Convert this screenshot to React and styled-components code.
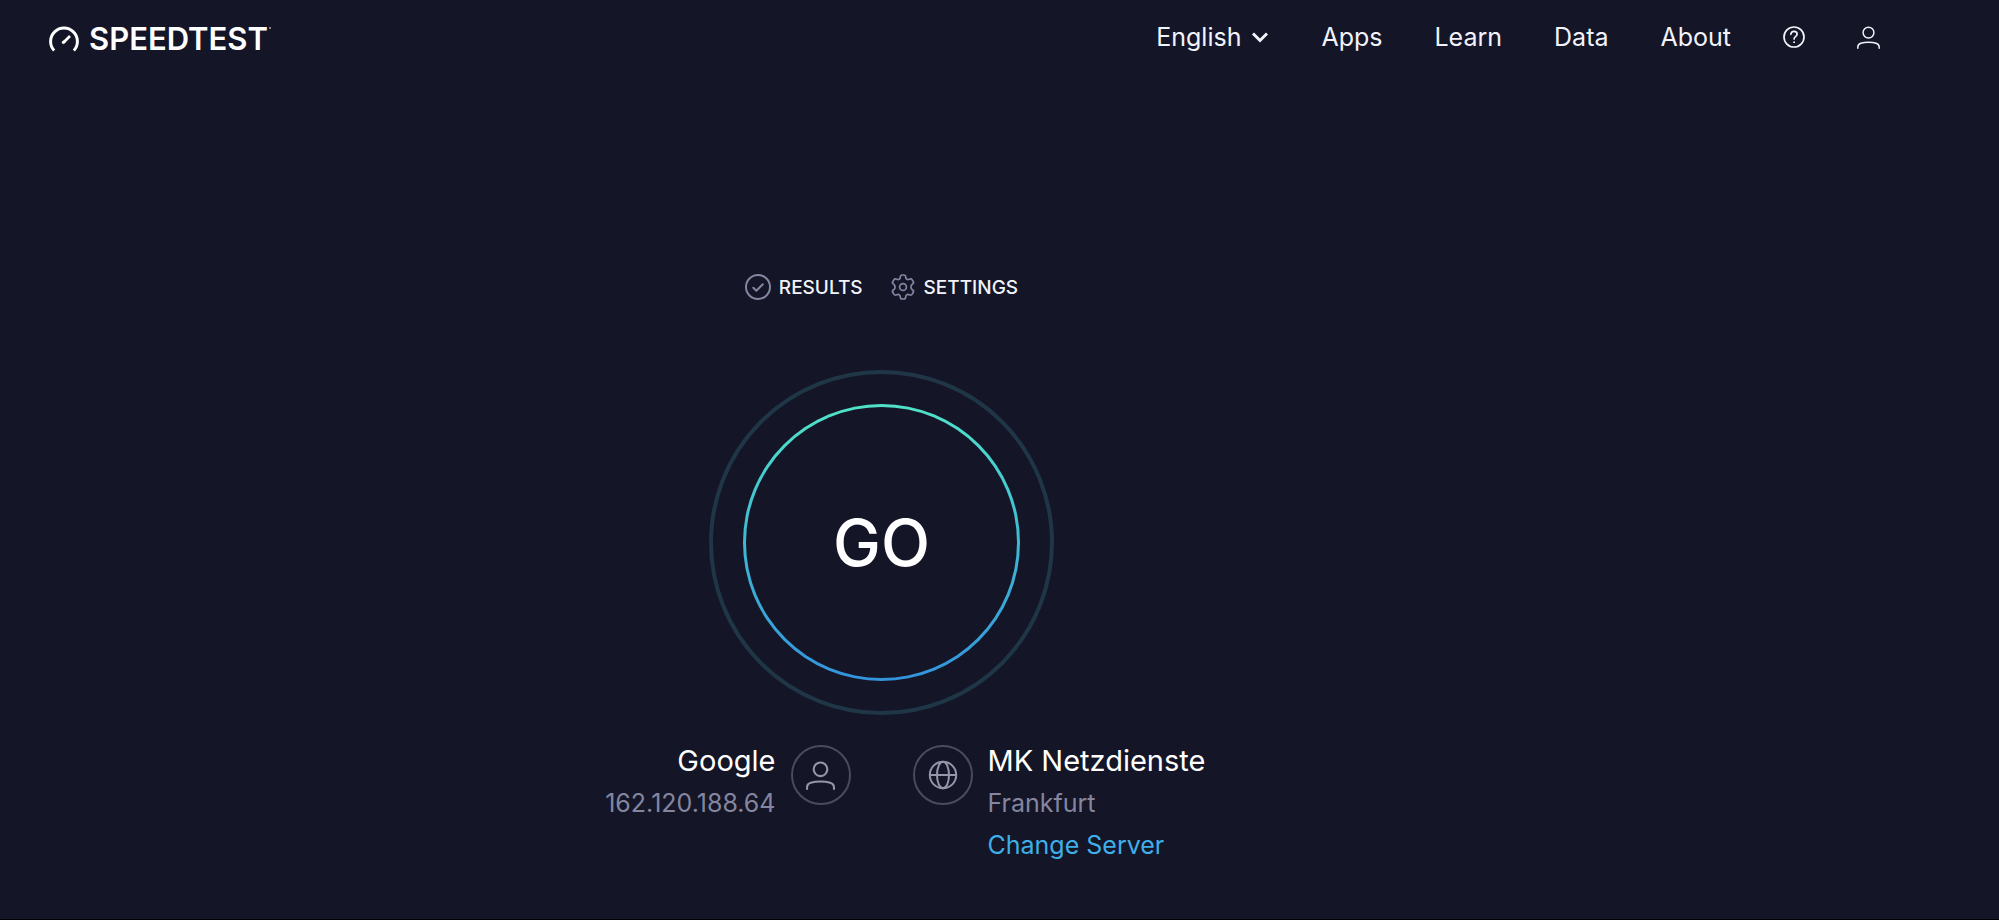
import React from 'react';
import styled, { createGlobalStyle } from 'styled-components';

const PersonIcon = ({ size, stroke }) => (
  <svg width={size} height={size} viewBox='0 0 28 28' fill='none' stroke='currentColor' strokeWidth={stroke} strokeLinecap='round' aria-hidden='true'>
    <circle cx='14' cy='8' r='6.6' />
    <path d='M1 27v-1.5c0-2.3 1.4-3.8 3.6-4.5 2.6-.8 5.8-1.2 9.4-1.2s6.8.4 9.4 1.2c2.2.7 3.6 2.2 3.6 4.5V27' />
  </svg>
);

const GaugeIcon = () => (
  <svg width='32' height='28' viewBox='0 0 32 28' fill='none' stroke='currentColor' strokeLinecap='round' aria-hidden='true'>
    <path d='M6.2 25.6A13.4 13.4 0 1 1 25.8 25.6' strokeWidth='3' strokeLinecap='butt' />
    <path d='M16 17L22 11' strokeWidth='2.6' strokeLinecap='butt' />
    <circle cx='15.5' cy='17.3' r='1.3' fill='currentColor' strokeWidth='1' />
  </svg>
);

const ChevronIcon = () => (
  <svg width='18' height='14' viewBox='0 0 18 14' fill='none' stroke='currentColor' strokeWidth='3' aria-hidden='true'>
    <path d='M2 3.5l7 7 7-7' />
  </svg>
);

const HelpIcon = () => (
  <svg width='22' height='22' viewBox='0 0 22 22' fill='none' stroke='currentColor' strokeWidth='1.7' strokeLinecap='round' aria-hidden='true'>
    <circle cx='11' cy='11' r='10' />
    <path d='M7.9 8.3c.1-1.9 1.3-3 3.1-3s3.1 1.100 3.100 2.700c0 1.300-.7 1.900-1.600 2.600s-1.400 1.200-1.400 2.400' />
    <circle cx='11' cy='16.2' r='.5' fill='currentColor' strokeWidth='1' />
  </svg>
);

const CheckIcon = () => (
  <svg width='26' height='26' viewBox='0 0 26 26' fill='none' stroke='currentColor' strokeWidth='2' strokeLinecap='round' strokeLinejoin='round' aria-hidden='true'>
    <circle cx='13' cy='13' r='12' />
    <path d='M8.3 13.8l3 2.9 6.5-6.5' />
  </svg>
);

const GearIcon = () => (
  <svg width='26' height='26' viewBox='0 0 26 26' fill='none' stroke='currentColor' strokeWidth='1.700' strokeLinejoin='round' aria-hidden='true'>
    <path d='M10.300 3.100Q10.500 1 12 1h2q1.500 0 1.700 2.100c.2 2.200 1.700 3 3.500 2.200q2-.9 2.800.3l1.300 2.200q.8 1.300-1 2.500c-1.800 1.300-1.800 4.100 0 5.400q1.800 1.200 1 2.500L22 20.400q-.8 1.200-2.800.3c-1.800-.8-3.300 0-3.500 2.200Q15.500 25 14 25h-2q-1.500 0-1.700-2.100c-.2-2.200-1.700-3-3.500-2.200q-2 .9-2.800-.3l-1.300-2.200q-.8-1.300 1-2.500c1.800-1.300 1.800-4.100 0-5.400q-1.800-1.200-1-2.500L4 5.600q.8-1.200 2.800-.3c1.800.8 3.300 0 3.500-2.200z' />
    <circle cx='13' cy='13' r='3.4' />
  </svg>
);

const GlobeIcon = () => (
  <svg width='30' height='30' viewBox='0 0 30 30' fill='none' stroke='currentColor' strokeWidth='2' aria-hidden='true'>
    <circle cx='15' cy='15' r='13.2' />
    <ellipse cx='15' cy='15' rx='6' ry='13.2' />
    <path d='M1.8 15h26.4' />
  </svg>
);

function App() {
  return (
    <Page>
      <GlobalStyle />
      <Header>
        <Logo href='#'>
          <GaugeIcon />
          SPEEDTEST
          <TradeMark />
        </Logo>
        <Nav>
          <Language>
            <LanguageSelect aria-label='Language' defaultValue='en'>
              <option value='en'>English</option>
            </LanguageSelect>
            <ChevronIcon />
          </Language>
          <NavLink href='#'>Apps</NavLink>
          <NavLink href='#'>Learn</NavLink>
          <NavLink href='#'>Data</NavLink>
          <NavLink href='#'>About</NavLink>
          <NavLink href='#' aria-label='Help'>
            <HelpIcon />
          </NavLink>
          <NavLink href='#' aria-label='Account'>
            <PersonIcon size={23} stroke={1.8} />
          </NavLink>
        </Nav>
      </Header>
      <Main>
        <Tabs>
          <Tab href='#'>
            <CheckIcon />
            <TabText>RESULTS</TabText>
          </Tab>
          <Tab href='#'>
            <GearIcon />
            <TabText>SETTINGS</TabText>
          </Tab>
        </Tabs>
        <GoButton>
          <GoRing>GO</GoRing>
        </GoButton>
        <Connection>
          <Party $end>
            <Details>
              <Name>Google</Name>
              <Detail>162.120.188.64</Detail>
            </Details>
            <Badge>
              <PersonIcon size={29} stroke={2} />
            </Badge>
          </Party>
          <Party>
            <Badge>
              <GlobeIcon />
            </Badge>
            <Details>
              <Name>MK Netzdienste</Name>
              <Detail>Frankfurt</Detail>
              <ServerLink href='#'>Change Server</ServerLink>
            </Details>
          </Party>
        </Connection>
      </Main>
    </Page>
  );
}

const GlobalStyle = createGlobalStyle`
  * {
    box-sizing: border-box;
  }

  body {
    margin: 0;
    background-color: #141526;
    color: #ffffff;
    font-family: Inter, sans-serif;
  }

  svg {
    display: block;
    flex-shrink: 0;
  }
`;

const Page = styled.div`
  min-height: 100vh;
  border-bottom: 1px solid #000000;
`;

const Header = styled.header`
  display: flex;
  align-items: center;
  justify-content: space-between;
  height: 74px;
  padding: 0 119px 0 48px;
`;

const Logo = styled.a`
  display: flex;
  align-items: center;
  gap: 9px;
  padding-top: 4px;
  color: #ffffff;
  font-size: 31px;
  font-weight: 600;
  line-height: 36px;
  text-decoration: none;
`;

const TradeMark = styled.span`
  align-self: flex-start;
  width: 2px;
  height: 2px;
  margin: 6px 0 0 -8px;
  border-radius: 50%;
  background-color: #a5a6b4;
`;

const Nav = styled.nav`
  display: flex;
  align-items: center;
  gap: 52px;
  color: #f2f3fa;
`;

const Language = styled.label`
  display: flex;
  align-items: center;
  gap: 10px;
`;

const LanguageSelect = styled.select`
  appearance: none;
  field-sizing: content;
  padding: 0;
  border: none;
  outline: none;
  background-color: transparent;
  color: inherit;
  font-family: inherit;
  font-size: 25px;
  line-height: 32px;
  cursor: pointer;
`;

const NavLink = styled.a`
  color: inherit;
  font-size: 25px;
  line-height: 32px;
  text-decoration: none;
  &:hover {
    color: #9193a8;
  }
`;

const Main = styled.main`
  display: flex;
  flex-direction: column;
  align-items: center;
  padding: 199px 236px 40px 0;
`;

const Tabs = styled.div`
  display: flex;
  gap: 27px;
  margin-bottom: 69px;
`;

const Tab = styled.a`
  display: flex;
  align-items: center;
  gap: 8px;
  height: 28px;
  color: #8486a0;
  text-decoration: none;
`;

const TabText = styled.span`
  color: #f2f3fa;
  font-size: 19px;
  font-weight: 500;
`;

const GoButton = styled.button`
  display: flex;
  align-items: center;
  justify-content: center;
  width: 345px;
  height: 345px;
  padding: 0;
  border: 4px solid #1f3647;
  border-radius: 50%;
  background-color: transparent;
  color: #ffffff;
  font-family: inherit;
  cursor: pointer;
`;

const GoRing = styled.span`
  display: flex;
  align-items: center;
  justify-content: center;
  width: 277px;
  height: 277px;
  border: 3px solid transparent;
  border-radius: 50%;
  background: linear-gradient(#141526, #141526) padding-box,
    linear-gradient(#50e3c8, #3fb9d3 50%, #3393dc) border-box;
  font-size: 64px;
  font-weight: 500;
`;

const Connection = styled.div`
  display: grid;
  grid-template-columns: 1fr 1fr;
  gap: 62px;
  width: 100%;
  margin-top: 25px;
`;

const Party = styled.div`
  display: flex;
  align-items: flex-start;
  justify-content: ${(props) => (props.$end ? 'flex-end' : 'flex-start')};
  gap: 15px;
  text-align: ${(props) => (props.$end ? 'right' : 'left')};
`;

const Details = styled.div`
  display: flex;
  flex-direction: column;
  line-height: 42px;
`;

const Badge = styled.div`
  display: flex;
  align-items: center;
  justify-content: center;
  width: 60px;
  height: 60px;
  margin-top: 5px;
  border: 2px solid #4b4b60;
  border-radius: 50%;
  color: #9596ab;
`;

const Name = styled.div`
  font-size: 29px;
`;

const Detail = styled.div`
  color: #8486a0;
  font-size: 25px;
`;

const ServerLink = styled.a`
  color: #3eafe8;
  font-size: 25px;
  text-decoration: none;
  &:hover {
    text-decoration: underline;
  }
`;

export default App;
